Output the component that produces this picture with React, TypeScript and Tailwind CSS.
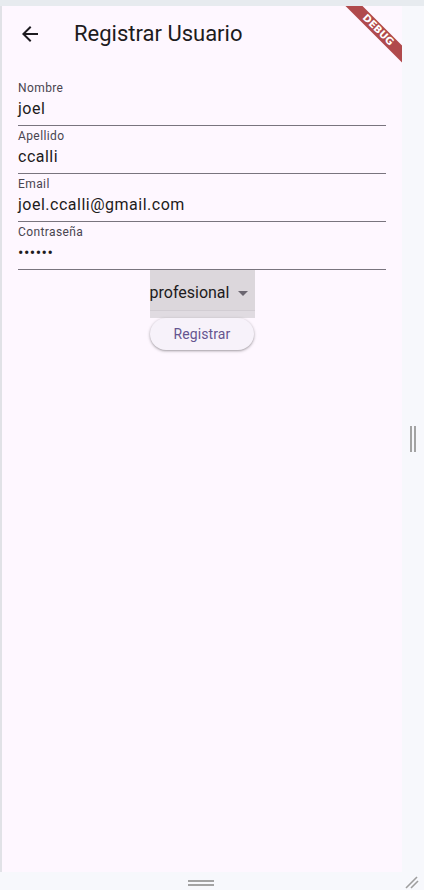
import React from "react";

function Field({ label, value }: { label: string; value: string }) {
  return (
    <div className="h-[48px] flex flex-col border-b border-[#79747e]">
      <div className="text-[12px] leading-[16px] mt-[2px] tracking-[0.4px] text-[#49454f]">{label}</div>
      <div className="text-[16px] leading-[24px] mt-[1px] tracking-[0.5px] text-[#1d1b20]">{value}</div>
    </div>
  );
}

export default function App() {
  return (
    <div
      className="w-[424px] h-[890px] flex flex-col bg-[#f7f8fc] overflow-hidden"
      style={{ fontFamily: "Roboto, 'Noto Sans', sans-serif" }}
    >
      <div className="h-[6px] bg-[#e7ebef] shrink-0" />
      <div className="flex h-[866px] shrink-0">
        <div className="w-[2px] bg-[#e1e2e7]" />
        <div className="w-[400px] relative overflow-hidden bg-[#fef7ff] flex flex-col">
          {/* App bar */}
          <div className="h-[56px] flex items-center shrink-0">
            <div className="w-[56px] h-[56px] flex items-center justify-center">
              <svg width="24" height="24" viewBox="0 0 24 24" fill="#1d1b20">
                <path d="M20 11H7.83l5.59-5.59L12 4l-8 8 8 8 1.41-1.41L7.83 13H20v-2z" />
              </svg>
            </div>
            <div className="ml-[16px] text-[22px] leading-[28px] text-[#1d1b20]">Registrar Usuario</div>
          </div>
          {/* Form */}
          <div className="px-[16px] pt-[16px] flex flex-col">
            <Field label="Nombre" value="joel" />
            <Field label="Apellido" value="ccalli" />
            <Field label="Email" value="joel.ccalli@gmail.com" />
            <Field label="Contraseña" value="••••••" />
            <div className="flex flex-col items-center">
              <div className="w-[105px] h-[48px] flex flex-col bg-[#dcd7dc]">
                <div className="h-[40px] flex items-center pt-[6px]">
                  <span className="w-[81px] text-[16px] leading-[24px] text-[#1d1b20]">profesional</span>
                  <svg width="24" height="24" viewBox="0 0 24 24" fill="#6b6670">
                    <path d="M7 10l5 5 5-5z" />
                  </svg>
                </div>
                <div className="h-[1px] bg-[#d2cdd3]" />
                <div className="flex-1 bg-[#e0dbe1]" />
              </div>
              <div className="w-[104px] h-[32px] rounded-full bg-[#f7f2fa] shadow-[0_1px_2px_rgba(0,0,0,0.25),0_1px_3px_1px_rgba(0,0,0,0.1)] flex items-center justify-center">
                <span className="text-[14px] leading-[20px] font-normal tracking-[0.1px] text-[#65558f]">Registrar</span>
              </div>
            </div>
          </div>
          {/* Debug banner */}
          <div className="absolute left-[326px] top-[18px] w-[100px] h-[12px] rotate-45 bg-[#b04a4c] flex items-center justify-center">
            <span
              className="text-[10px] leading-[12px] font-bold text-white"
              style={{ fontFamily: "'DejaVu Sans', sans-serif" }}
            >
              DEBUG
            </span>
          </div>
        </div>
        <div className="flex-1 flex items-center justify-center">
          <div className="flex gap-[2px] h-[26px] -ml-[1px]">
            <div className="w-[2px] bg-[#a3a3a3]" />
            <div className="w-[2px] bg-[#a3a3a3]" />
          </div>
        </div>
      </div>
      <div className="h-[18px] flex shrink-0 relative">
        <div className="w-[402px] flex justify-center pt-[8px]">
          <div className="flex flex-col gap-[2px] w-[26px]">
            <div className="h-[2px] bg-[#a3a3a3]" />
            <div className="h-[2px] bg-[#a3a3a3]" />
          </div>
        </div>
        <svg className="absolute left-[404px] top-[3px]" width="16" height="14" viewBox="0 0 16 14">
          <line x1="2" y1="13" x2="13" y2="2" stroke="#9e9e9e" strokeWidth="1.6" />
          <line x1="7" y1="13" x2="14" y2="6" stroke="#9e9e9e" strokeWidth="1.6" />
        </svg>
      </div>
    </div>
  );
}
